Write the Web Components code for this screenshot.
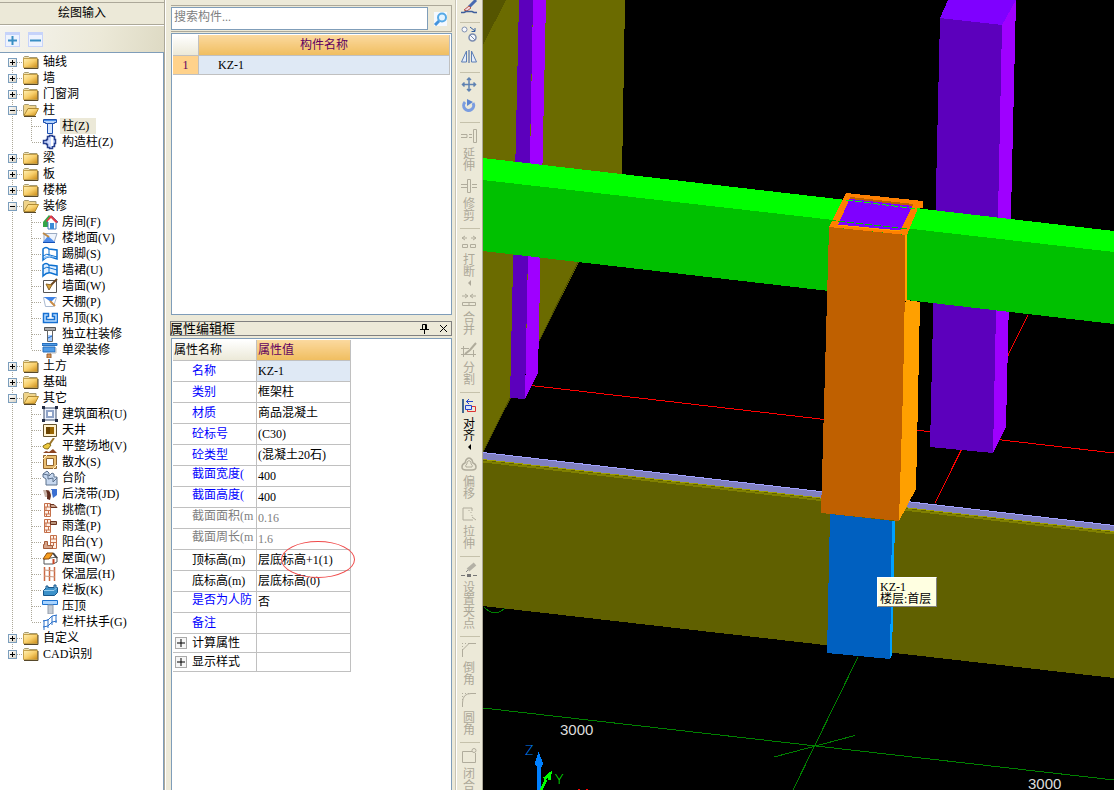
<!DOCTYPE html>
<html lang="zh-CN">
<head>
<meta charset="utf-8">
<title>绘图输入</title>
<style>
  html, body { margin: 0; height: 100%; }
  body { font: 12px/16px "Liberation Serif", "Noto Sans CJK SC", serif; color: #000; background: #ece9d8; overflow: hidden; }
</style>
</head>
<body>
<cad-workbench>
  <draw-panel slot="dock" heading="绘图输入"><component-tree></component-tree></draw-panel>
  <side-panel slot="side">
    <search-bar></search-bar>
    <component-list></component-list>
    <property-editor heading="属性编辑框"></property-editor>
  </side-panel>
  <edit-toolbar slot="tools"></edit-toolbar>
  <model-view slot="view"><hint-tip>KZ-1<br>楼层:首层</hint-tip></model-view>
</cad-workbench>

<script>
const define = (name, html, setup) => customElements.define(name, class extends HTMLElement {
  connectedCallback() {
    if (this.shadowRoot) return;
    const root = this.attachShadow({ mode: 'open' });
    root.innerHTML = html;
    if (setup) setup(this, root);
  }
});
const svg = (body, w = 16, h = 16) => `<svg width="${w}" height="${h}" viewBox="0 0 ${w} ${h}" aria-hidden="true">${body}</svg>`;

/* ---------- tree icons, 16 by 16 ---------- */
const GOLD = '<defs><linearGradient id="gold" x1="0" y1="0" x2="1" y2="1"><stop offset="0" stop-color="#fff0b4"/><stop offset=".5" stop-color="#f8cf6a"/><stop offset="1" stop-color="#c98a16"/></linearGradient></defs>';
const FOLDER = GOLD + '<path d="M.5 3.500l1-1h4l1 1h7.500v2H.5z" fill="#efe2b4" stroke="#a59a72"/><path d="M.5 4.500h14v9H.5z" fill="url(#gold)" stroke="#c4a04a"/><path d="M1 14.500h14V5" fill="none" stroke="#57482a"/>';
const FOLDER_OPEN = GOLD + '<path d="M.5 13.500v-10l1-1h4l1 1h6.500v3" fill="#f0d48a" stroke="#a59a72"/><path d="M1 13.500l4-7h10.500l-3.500 7z" fill="url(#gold)" stroke="#b08a32"/><path d="M1 14.500h12" stroke="#57482a"/>';
const BRICK = '<path d="M2.500 1.500h6v13h-6zM2.500 5h6M2.500 8.500h6M2.500 12h6M5.500 1.500V5M4 5v3.500M6.500 8.500V12M4.500 12v2.500" fill="#fff0e6" stroke="#c5704a"/>';
const ICON = {
  column: '<path d="M1.500 1.500h13v3h-2v1h-9v-1h-2z" fill="#b7d4fb" stroke="#1c4faf"/><path d="M5.500 5.500h5v10h-5z" fill="#d9e8ff" stroke="#1c4faf"/><path d="M2 2.500h12" stroke="#4a8de8"/>',
  tie: '<path d="M5.500 2.500h2v-1h3v1h2v3h1v4h-1v3h-2v2h-3v-1h-2v-3h-1v-1h-3v-3h3v-1h1z" fill="#cfdcff" stroke="#263f8e" stroke-width="1.500"/><path d="M10 3v9" stroke="#fff" stroke-width="2"/>',
  room: '<path d="M1 8l6-7 3 3-4 4v5H1z" fill="#35a548"/><path d="M5 7l5-5 6 6-2 1v6H6V8z" fill="#fff" stroke="#437ac2"/><path d="M4 7l5-6 7 7-2 1-5-5-4 4z" fill="#e23b44"/><path d="M8 9h4v6H8z" fill="#3a8bd7"/>',
  floor: '<path d="M2 3.500h13l-3 9H2z" fill="#edf3fc" stroke="#9babc3"/><path d="M6 6l7 6H1z" fill="#4e8dec"/><path d="M1 12.500h12" stroke="#1451b6"/><path d="M1 3l6 4" stroke="#bd8a48" stroke-width="2"/>',
  skirting: '<path d="M1 10V3q3-3 6 0l8 1v9l-6-2q-4-1-8 3z" fill="#fff" stroke="#0c70d0" stroke-width="1.500"/><path d="M7 3v7M1 10q4-3 7-1l7 2" fill="none" stroke="#0c70d0"/><path d="M2 11q3-2 6-1l6 2-6-1q-3 0-6 2z" fill="#94c5f7"/>',
  wainscot: '<path d="M1 10V3q3-3 6 0l8 1v9l-6-2q-4-1-8 3z" fill="#e0efff" stroke="#0c70d0" stroke-width="1.500"/><path d="M7 3v8M1 7q4-3 7-1l7 2" fill="none" stroke="#0c70d0"/>',
  wall: '<path d="M1.500 2.500h13v12h-13z" fill="#fff" stroke="#555"/><path d="M15 1l-6 6" stroke="#6c4823" stroke-width="2"/><path d="M4 6l6 1-3 5z" fill="#d7a23c" stroke="#8c6427"/>',
  ceiling: '<path d="M1.500 3.500h13l-3 9h-8z" fill="#fff" stroke="#aab9cf"/><path d="M2 3h12L9 8z" fill="#3f83e6"/><path d="M8 7l5 5" stroke="#c88b46" stroke-width="2"/>',
  hung: '<path d="M1.500 3.500h5v3h-2v3h8v-3h-2v-3h5v9h-14z" fill="#b9dcff" stroke="#1670d2" stroke-width="1.500"/>',
  colfinish: '<path d="M2.500 1.500h11v3h-11z" fill="#aaa" stroke="#555"/><path d="M5.500 4.500h5v11h-5z" fill="#fff" stroke="#666"/><path d="M6 9h4v6H6z" fill="#a6cdff"/><path d="M6 12l4-2" stroke="#1c66c4"/>',
  beamfinish: '<path d="M0 1.500h15v2H0zM1 5h12v5H1z" fill="#4f9be6" stroke="#276fbd"/><path d="M14 6v5H8" fill="none" stroke="#bbb"/><path d="M5 12h4v4H5z" fill="#d69359" stroke="#9b602d"/>',
  area: '<path d="M2 2h12v12H2z" fill="#eef3fc" stroke="#3b4d6d"/><path d="M5 5h6v6H5z" fill="#fff" stroke="#8ea2c6" stroke-width="2"/><path d="M0 0h3v3H0zM13 0h3v3h-3zM0 13h3v3H0zM13 13h3v3h-3z" fill="#222b42"/>',
  well: '<path d="M1.500 2.500h13v12h-13z" fill="#fff2ce" stroke="#65522c"/><path d="M4 5h8v7H4z" fill="#9a6500"/><path d="M4 5h4v7H4z" fill="#6a4300"/>',
  level: '<path d="M12 0L7 7" stroke="#9b7427" stroke-width="2"/><path d="M1 8l5-3 3 2-3 4q-5 0-5-3z" fill="#ebc83f" stroke="#866b16"/><path d="M1 15l3-2 3 1 4-3 4 4z" fill="#8c4421"/>',
  apron: '<path d="M1.500 1.500h13v13h-13z" fill="#eabf72" stroke="#92652c"/><path d="M4.500 4.500h7v7h-7z" fill="#fff" stroke="#92652c"/><path d="M1 5l4-4M11 15l4-4" stroke="#fff1cf"/>',
  steps: '<path d="M1 4l4-3 2 2v3l3-3 2 1v3h3v8H4V9L1 7z" fill="#c7d8ef" stroke="#5b708c"/><path d="M1 4l5 1v4l5-1v4l4-4" fill="none" stroke="#5b708c"/>',
  postcast: '<path d="M1 4h7v7H3z" fill="#c8b4a8"/><path d="M9 3h6v6l-4 3z" fill="#3b6fd1"/><path d="M4 4q7 0 4 10l-3-1q1-5-1-9z" fill="#5f2d1e"/><path d="M7 4h3v6z" fill="#eee"/>',
  eave: BRICK + '<path d="M8 2.500h4l3 3H9z" fill="#cda28a" stroke="#6b3420"/>',
  canopy: BRICK + '<path d="M8.500 3.500h6v3h-6z" fill="#b99379" stroke="#6b3420"/>',
  balcony: '<path d="M8.500 1.500h6v13h-6zM8.500 5h6M8.500 8.500h6M11.500 1.500V5M11.500 8.500V12" fill="#fff0e6" stroke="#c5704a"/><path d="M1.500 10.500v4h9v-3h-5v-4h-3v3z" fill="#d6a58a" stroke="#a35b39"/>',
  roof: '<path d="M2 9v5h9l4-2V7z" fill="#fff" stroke="#555"/><path d="M5 3h6l-4 6H1z" fill="#f79e20" stroke="#8b4b0b"/><path d="M11 3l4 5" stroke="#444" stroke-width="2"/><path d="M11.500 14V9" stroke="#c84725" stroke-width="2"/>',
  insulation: '<path d="M2.500 1v14M7.500 1v14M12.500 1v14" stroke="#cd6841" stroke-width="1.500"/><path d="M2 4l11 1M2 10l11 1" stroke="#c9967c"/>',
  parapet: '<path d="M1.500 8.500l3-3h11v5l-3 3h-11z" fill="#3c91c9" stroke="#17568a"/><path d="M4 6V4h2v2M12 6V3h2v3" stroke="#17568a" fill="#8bc7ee"/><path d="M2 8.500h10l3-3" fill="none" stroke="#9cd0f1"/>',
  coping: '<path d="M.5 2.500h15v4H.5z" fill="#a9d4ff" stroke="#1d72ce"/><path d="M6 7h5v9H6z" fill="#c5cbd3" stroke="#949eac"/>',
  rail: '<path d="M1 7l5-1 4-4 5-1M1 13l5-1 4-4 5-1M2 6v10M6 5v9M10 2v9M14 1v8" fill="none" stroke="#2a70ca"/>'
};

/* ---------- frame ---------- */
define('cad-workbench', `<style>
  :host { display: grid; grid-template-columns: 165px 291px 27px minmax(0, 1fr); height: 100vh; background: #ece9d8; }
  ::slotted(*) { min-height: 0; overflow: hidden; }
</style><slot name="dock"></slot><slot name="side"></slot><slot name="tools"></slot><slot name="view"></slot>`);

define('draw-panel', `<style>
  :host { display: flex; flex-direction: column; border-right: 1px solid #aca899; box-sizing: border-box; }
  h2 { margin: 2px 0 0; border: solid #aca899; border-width: 1px 0; font: inherit; line-height: 21px; text-align: center; }
  .bar { display: flex; gap: 8px; align-items: center; padding: 0 5px; height: 27px; background: linear-gradient(100deg, #f5f4ef, #ece9d8 60%, #dedac4); border-top: 1px solid #fff; box-sizing: border-box; }
  button { width: 15px; height: 15px; padding: 0; border: 1px solid #c6d3fa; border-top: 3px solid #c6d3fa; background: #eef3fe; display: flex; align-items: center; justify-content: center; }
  .box { flex: 1; min-height: 0; border-top: 1px solid #7f9db9; border-right: 1px solid #7f9db9; background: #fff; overflow: hidden; }
</style><h2></h2>
<div class="bar"><button aria-label="展开">${svg('<path d="M1 5.500h9M5.500 1v9" stroke="#3a8fc4" stroke-width="2"/>', 11, 11)}</button><button aria-label="折叠">${svg('<path d="M0 5.500h11" stroke="#3a8fc4" stroke-width="2"/>', 11, 11)}</button></div>
<div class="box"><slot></slot></div>`, (el, root) => { root.querySelector('h2').textContent = el.getAttribute('heading'); });

const TREE = [
  ['轴线'], ['墙'], ['门窗洞'],
  ['柱', [['柱(Z)', 'column', 1], ['构造柱(Z)', 'tie']]],
  ['梁'], ['板'], ['楼梯'],
  ['装修', [['房间(F)', 'room'], ['楼地面(V)', 'floor'], ['踢脚(S)', 'skirting'], ['墙裙(U)', 'wainscot'], ['墙面(W)', 'wall'], ['天棚(P)', 'ceiling'], ['吊顶(K)', 'hung'], ['独立柱装修', 'colfinish'], ['单梁装修', 'beamfinish']]],
  ['土方'], ['基础'],
  ['其它', [['建筑面积(U)', 'area'], ['天井', 'well'], ['平整场地(V)', 'level'], ['散水(S)', 'apron'], ['台阶', 'steps'], ['后浇带(JD)', 'postcast'], ['挑檐(T)', 'eave'], ['雨蓬(P)', 'canopy'], ['阳台(Y)', 'balcony'], ['屋面(W)', 'roof'], ['保温层(H)', 'insulation'], ['栏板(K)', 'parapet'], ['压顶', 'coping'], ['栏杆扶手(G)', 'rail']]],
  ['自定义'], ['CAD识别']
];
define('component-tree', `<style>
  :host { display: block; padding-top: 1px; }
  ul { list-style: none; margin: 0; padding: 0; }
  .row { display: flex; align-items: center; height: 16px; white-space: nowrap; }
  .group { --dots: linear-gradient(#aca899 1px, transparent 1px); background: var(--dots) 12px 0 / 1px 2px repeat-y; }
  .group:first-child { background: linear-gradient(#fff, #fff) 0 0 / 100% 8px no-repeat, var(--dots) 12px 0 / 1px 2px repeat-y; }
  .group:last-child { background: linear-gradient(#fff, #fff) 0 100% / 100% 8px no-repeat, var(--dots) 12px 0 / 1px 2px repeat-y; }
  .group > .row { padding-left: 8px; }
  button { width: 9px; height: 9px; padding: 0; border: 1px solid #7b9ebd; background: linear-gradient(135deg, #fff, #d8d2c4); display: flex; }
  .dash { width: 6px; height: 1px; background: linear-gradient(90deg, #aca899 1px, transparent 1px) 0 0 / 2px 1px; }
  .row > svg { flex: none; }
  .name { padding: 0 2px; margin-left: 2px; }
  .child { background: var(--dots) 31px 0 / 1px 2px repeat-y; }
  .child:last-child { background: linear-gradient(#fff, #fff) 31px 8px / 1px 8px no-repeat, var(--dots) 31px 0 / 1px 2px repeat-y; }
  .child .row { padding-left: 32px; }
  .child .dash { width: 10px; }
  .on { background: #ece9d8; padding-right: 7px; }
</style><ul role="tree"></ul>`, (el, root) => {
  const sign = open => svg(`<path d="M1 3.500h5${open ? '' : 'M3.500 1v5'}" stroke="#000"/>`, 7, 7);
  root.querySelector('ul').innerHTML = TREE.map(([name, kids]) => `<li class="group" role="treeitem"><div class="row"><button aria-label="${kids ? '折叠' : '展开'}">${sign(kids)}</button><span class="dash"></span>${svg(kids ? FOLDER_OPEN : FOLDER)}<span class="name">${name}</span></div>${kids ? `<ul role="group">${kids.map(([t, i, on]) => `<li class="child" role="treeitem"><div class="row"><span class="dash"></span>${svg(ICON[i])}<span class="name${on ? ' on' : ''}">${t}</span></div></li>`).join('')}</ul>` : ''}</li>`).join('');
});

/* ---------- middle column ---------- */
define('side-panel', `<style>
  :host { display: flex; flex-direction: column; padding: 5px 3px 0 5px; border-right: 1px solid #c8c4b4; box-sizing: border-box; border-left: 1px solid #fff; }
</style><slot></slot>`);

define('search-bar', `<style>
  :host { display: flex; height: 27px; box-sizing: border-box; border: solid #aca899; border-width: 1px 1px 1px 0; padding: 1px 0; gap: 1px; }
  input { flex: 1; min-width: 0; box-sizing: border-box; border: 1px solid #7f9db9; background: #fff; font: inherit; padding: 0 2px 4px; outline: 0; }
  input::placeholder { color: #808080; opacity: 1; }
  button { width: 22px; border: 0; padding: 0; background: #ece9d8; display: flex; align-items: center; justify-content: center; }
</style><input aria-label="搜索构件" placeholder="搜索构件..."><button aria-label="搜索">${svg('<path d="M1 0h13v14H1z" fill="#f4f9ff"/><circle cx="9" cy="5.500" r="4" fill="#e3f3ff" stroke="#55a9e6" stroke-width="2"/><path d="M6 9l-4 4" stroke="#4393dd" stroke-width="3"/>', 15, 14)}</button>`);

define('component-list', `<style>
  :host { display: block; height: 282px; margin-top: 1px; box-sizing: border-box; background: #fff; border: 1px solid #7f9db9; padding: 1px; flex: none; }
  table { width: 100%; border-collapse: collapse; table-layout: fixed; }
  th, td { padding: 0; font-weight: 400; border: solid #c0c0c0; border-width: 0 1px 1px 0; line-height: 18px; height: 18px; }
  thead th { height: 20px; background: linear-gradient(#fbd99f, #f0be60); color: #600060; }
  thead th:first-child { width: 25px; background: linear-gradient(#fff, #ece9d8); }
  tbody th { background: #ffd28b; color: #600060; }
  tbody td { background: #dfe9f5; padding-left: 19px; }
</style><table><thead><tr><th aria-label="序号"></th><th>构件名称</th></tr></thead><tbody><tr><th>1</th><td>KZ-1</td></tr></tbody></table>`);

const PROPS = [
  ['名称', 'KZ-1', 'key sel'], ['类别', '框架柱', 'key'], ['材质', '商品混凝土', 'key'], ['砼标号', '(C30)', 'key'], ['砼类型', '(混凝土20石)', 'key'],
  ['截面宽度(', '400', 'key up'], ['截面高度(', '400', 'key up'], ['截面面积(m', '0.16', 'off up'], ['截面周长(m', '1.6', 'off up'],
  ['顶标高(m)', '层底标高+1(1)', ''], ['底标高(m)', '层底标高(0)', ''], ['是否为人防', '否', 'key up'], ['备注', '', 'key'],
  ['计算属性', '', 'sub'], ['显示样式', '', 'sub']
];
define('property-editor', `<style>
  :host { display: flex; flex-direction: column; flex: 1; min-height: 0; margin-top: 6px; }
  header { display: flex; align-items: center; gap: 8px; height: 15px; box-sizing: border-box; border: 1px solid #808080; margin: 0 0 2px -1px; padding-right: 2px; }
  h2 { flex: 1; margin: 0 0 0 -1px; font: inherit; font-size: 13px; line-height: 13px; }
  header button { border: 0; padding: 0; background: none; width: 11px; height: 11px; display: flex; }
  .body { position: relative; flex: 1; min-height: 0; border: solid #7f9db9; border-width: 1px 1px 0; background: #fff; padding: 1px; }
  table { border-collapse: collapse; table-layout: fixed; width: 178px; }
  th, td { padding: 0 0 0 1px; font-weight: 400; text-align: left; border: solid #c0c0c0; border-width: 0 1px 1px 0; height: 20px; line-height: 16px; white-space: nowrap; overflow: hidden; }
  thead th { background: linear-gradient(#fff, #ece9d8); }
  thead th:first-child { width: 82px; }
  thead th + th { background: linear-gradient(#fbd99f, #f0be60); color: #600060; }
  tbody th { padding-left: 19px; }
  .key th { color: #00f; }
  .off { color: #808080; }
  .up th { padding-bottom: 4px; height: 16px; }
  .sel td { background: #dfe9f5; }
  .sub th { padding-left: 2px; }
  .sub th, .sub td { height: 18px; }
  .sub div { display: flex; align-items: center; gap: 5px; }
  .sub button { width: 12px; height: 12px; padding: 0; border: 1px solid #aaa; background: #f6f6f6; display: flex; }
  .mark { position: absolute; left: 109px; top: 202px; width: 74px; height: 37px; border: 1px solid #f04848; border-radius: 50%; box-sizing: border-box; }
</style><header><h2></h2><button aria-label="固定">${svg('<path d="M3.500 1.500h4v5h-4zM1 6.500h9M5.500 6v5M6.500 1v5" fill="none" stroke="#000"/>', 11, 11)}</button><button aria-label="关闭">${svg('<path d="M2 2l7 7M9 2l-7 7" stroke="#000"/>', 11, 11)}</button></header>
<div class="body"><table><thead><tr><th>属性名称</th><th>属性值</th></tr></thead><tbody></tbody></table><div class="mark"></div></div>`, (el, root) => {
  root.querySelector('h2').textContent = el.getAttribute('heading');
  const plus = `<button aria-label="展开">${svg('<path d="M1 5h8M5 1v8" stroke="#000"/>', 10, 10)}</button>`;
  root.querySelector('tbody').innerHTML = PROPS.map(([k, v, c]) => `<tr class="${c}"><th scope="row">${c === 'sub' ? `<div>${plus}<span>${k}</span></div>` : k}</th><td>${v}</td></tr>`).join('');
});

/* ---------- vertical toolbar ---------- */
const G = 'fill="none" stroke="#b0ac9c"';
const TOOLS = [
  ['', '<path d="M15 0L8 7" stroke="#496bb1" stroke-width="3"/><path d="M3 10l5-4 2 2-4 3z" fill="#f3d3e0" stroke="#b35a4b"/><path d="M0 12.500h3l2-1h6l2 1h3" fill="none" stroke="#3f5f9c" stroke-width="1.500"/>', '格式刷'], '-',
  ['', '<circle cx="3.500" cy="1.500" r="2.500" fill="#f6f8fc" stroke="#8291b1"/><circle cx="11.500" cy="9.500" r="3.500" fill="#f6f8fc" stroke="#7b8cb0" stroke-width="1.500"/><path d="M9 7l5 5" stroke="#7b8cb0"/><path d="M9-1l5 4M14 0v3.500h-3.500" fill="none" stroke="#345f9f"/>', '复制'],
  ['', '<path d="M5.500 1v11H.5zM10.500 1v11h5z" fill="#e4ecfa" stroke="#5d7eb5"/><path d="M8 0v13" stroke="#3d5f9d"/>', '镜像'], '-',
  ['', '<path d="M8 0v13M1.500 6.500h13M6 2l2-2 2 2M6 11l2 2 2-2M3.500 4.500l-2 2 2 2M12.500 4.500l2 2-2 2" fill="none" stroke="#5f82b2" stroke-width="1.500"/>', '移动'],
  ['', '<path d="M4 2a5 5 0 1 0 8 1" fill="none" stroke="#7b9de0" stroke-width="3"/><path d="M6-1v7l6-4z" fill="#5d86d0"/>', '旋转'], '-',
  ['延伸', `<path d="M0 6.500h6v3H0M8 6.500h3M8 9.500h3M12.500 1.500h3v13h-3z" ${G}/>`],
  ['修剪', `<path d="M0 6.500h6M0 9.500h6M6.500 1.500h3v13h-3zM11 6.500h5M11 9.500h5" ${G}/>`], '-',
  ['打断', `<path d="M1 4h5M4 2L1 4l3 2M10 4h5M12 2l3 2-3 2M1.500 10.500h5v3h-5zM9.500 10.500h5v3h-5z" ${G}/>`, '', 1],
  ['合并', `<path d="M1 4h5M4 2l3 2-3 2M10 4h5M12 2L9 4l3 2M1.500 10.500h13v3h-13zM8 10v3" ${G}/>`],
  ['分割', `<path d="M0 6.500h8M0 12.500h15M2.500 4v11M12.500 8v7" ${G}/><path d="M15 1L9 8l-5 4" ${G} stroke-width="2"/>`], '-',
  ['对齐', '<path d="M1 1h2v14H1z" fill="#41668f"/><path d="M6.500 8.500h8v5h-8z" fill="none" stroke="#d33"/><path d="M4.500 7.500h6v4h-6z" fill="#dce7fb" stroke="#24c"/><path d="M5 3.500h7M8 1L5.500 3.500 8 6" fill="none" stroke="#24c"/>', '', 1, 1],
  ['偏移', `<path d="M5 4q3-4 6 0l1 3q3 1 3 4t-4 3H5q-4 0-4-3t3-4z" ${G} stroke-width="1.500"/><path d="M6 6q2-3 4 0v2q2 1 1 3H5q-1-2 1-3z" ${G}/>`],
  ['拉伸', `<path d="M11 5V2H2v12h10M8 4v1M10 6v1M11 9v1" ${G}/><path d="M11 11l4 3" ${G}/>`], '-',
  ['设置夹点', '<path d="M14 2L7 8" stroke="#b4b1a6" stroke-width="4"/><path d="M7 8l-2 2" stroke="#888"/><path d="M0 13.500h4M12 13.500h4" stroke="#777"/><path d="M6 12h4v3H6z" fill="#777"/>'], '-',
  ['倒角', `<path d="M1.500 15V8L8 1.500h7" ${G}/><path d="M1 1.500h7M1.500 1v7" ${G} stroke-dasharray="1 2"/>`],
  ['圆角', `<path d="M1.500 15v-4Q1.500 1.500 10 1.500h5" ${G}/><path d="M1 1.500h7M1.500 1v7" ${G} stroke-dasharray="1 2"/>`], '-',
  ['闭合', `<path d="M11 3.500H1.500v11h13V5" ${G}/><circle cx="13" cy="2.500" r="2" ${G}/>`]
];
define('tool-item', `<style>
  :host { display: block; color: #aca899; }
  :host([live]) { color: #000; }
  button { display: flex; flex-direction: column; align-items: center; gap: 4px; padding: 0; border: 0; background: none; font: inherit; color: inherit; width: 24px; }
  svg { overflow: visible; }
  .label { width: 12px; line-height: 12px; word-break: break-all; }
  i { width: 0; height: 0; margin-top: -2px; border: 3px solid transparent; border-left: 0; border-right-color: currentColor; }
  .label:empty { display: none; }
</style><button></button>`);
define('edit-toolbar', `<style>
  :host { display: flex; flex-direction: column; border: solid; border-color: #fff #aca899 #fff #fff; border-width: 0 1px; box-sizing: border-box; }
  tool-item { flex: none; margin-bottom: 6px; }
  hr { flex: none; width: 20px; height: 5px; margin: 0 3px; border: 0; border-top: 1px solid #c5c1ab; }
</style>`, (el, root) => {
  for (const t of TOOLS) {
    if (t === '-') { root.append(document.createElement('hr')); continue; }
    const [label, icon, title, menu, live] = t;
    const item = document.createElement('tool-item');
    item.toggleAttribute('live', !!live);
    root.append(item);
    const b = item.shadowRoot.querySelector('button');
    if (title) b.setAttribute('aria-label', title);
    b.innerHTML = svg(icon) + `<span class="label">${label}</span>` + (menu ? '<i></i>' : '');
  }
});

/* ---------- 3D view ---------- */
define('model-view', `<style>
  :host { display: block; position: relative; background: #000; }
  svg { display: block; width: 100%; height: 100%; }
  text { font-family: "Liberation Sans", sans-serif; }
  .axis { font-family: Lato, sans-serif; font-weight: 300; }
  ::slotted(hint-tip) { position: absolute; left: 394px; top: 577px; }
</style>
<svg viewBox="483 0 631 790" preserveAspectRatio="xMinYMin slice" shape-rendering="crispEdges">
  <path d="M483 0h142l-3 176-139 277z" fill="#6b6b00"/>
  <path d="M578 262l-39 79-56 111" fill="none" stroke="#4e4e00"/>
  <path d="M483 0h23l-23 45z" fill="#555500"/>
  <path d="M531 385.500L1114 453M1028 315L935 503" stroke="#f00" fill="none"/>
  <path d="M519 0h14l-8 399-15-1z" fill="#5c00bc"/>
  <path d="M533 0h13l-8 373-13 26 5-236z" fill="#9f00ff"/>
  <path d="M948 0h68l-14 25-62-7z" fill="#7f00ff"/>
  <path d="M940 18l62 7-9 428-63-6z" fill="#5c00bc"/>
  <path d="M1002 25l14-25-10 427-13 26z" fill="#9f00ff"/>
  <path d="M483 606l631 72V525L483 452z" fill="#606000"/>
  <path d="M483 452l631 73v7L483 459z" fill="#8080c0"/>
  <path d="M483 452.500l631 73" stroke="#a0a0ff"/>
  <path d="M483 461.500l631 72" stroke="#808000" stroke-width="2"/>
  <path d="M483 459.500l631 72" stroke="#a0a000"/>
  <path d="M483 158l631 73v22L483 180z" fill="#0f0"/>
  <path d="M483 180l631 72v72L483 251z" fill="#00c000"/>
  <path d="M906 300l14 2-2 98-2 89-17 32-3-180z" fill="#ffa000"/>
  <path d="M821 513L829 227l77 8-3 155-4 131z" fill="#bf6000"/>
  <path d="M906 235v66" stroke="#ffa000" stroke-width="2"/>
  <path d="M846 193l77 8v7h-5l-11 27-78-8z" fill="#ff8000"/>
  <path d="M850 198l63 7-13 26-62-6z" fill="#7f00ff"/>
  <path d="M850 198l63 7" stroke="#bf6000" stroke-width="2"/>
  <path d="M838 225l62 6" stroke="#ffa000"/>
  <path d="M846 200l72 9" stroke="#0f0" stroke-dasharray="7 2"/>
  <path d="M829 220l78 9" stroke="#00c000" stroke-dasharray="7 2"/>
  <path d="M830 514l64 7-4 138-63-6z" fill="#0060c0"/>
  <path d="M892 521h3l-3 134-2 4z" fill="#00a0ff"/>
  <path d="M483 708l631 72M858 657l-65 133M774 757l81-21.500M484 607q6 6 11 6t10-5" fill="none" stroke="#008000"/>
  <text x="560" y="735" font-size="15" fill="#ddd">3000</text>
  <text x="1028" y="789" font-size="15" fill="#ddd">3000</text>
  <text class="axis" x="525" y="755" font-size="14" fill="#0080ff">Z</text>
  <text class="axis" x="555" y="784" font-size="14" fill="#0f0">Y</text>
  <path d="M538.500 752l5 12-2 3-1 23h-4l1-23-3-3z" fill="#0080ff"/>
  <path d="M541 790l5-10M544 779l6-5-1 6" stroke="#0f0" stroke-width="3" fill="none"/>
  <path d="M578 789.500h2M586 789.500h2" stroke="#f00"/>
</svg><slot></slot>`);
define('hint-tip', `<style>
  :host { display: block; box-sizing: border-box; width: 60px; height: 30px; padding: 3px 2px; background: #ffffe1; border: 1px solid #fff; border-right-color: #808080; border-bottom-color: #808080; line-height: 12px; white-space: nowrap; }
</style><slot></slot>`);
</script>
</body>
</html>
